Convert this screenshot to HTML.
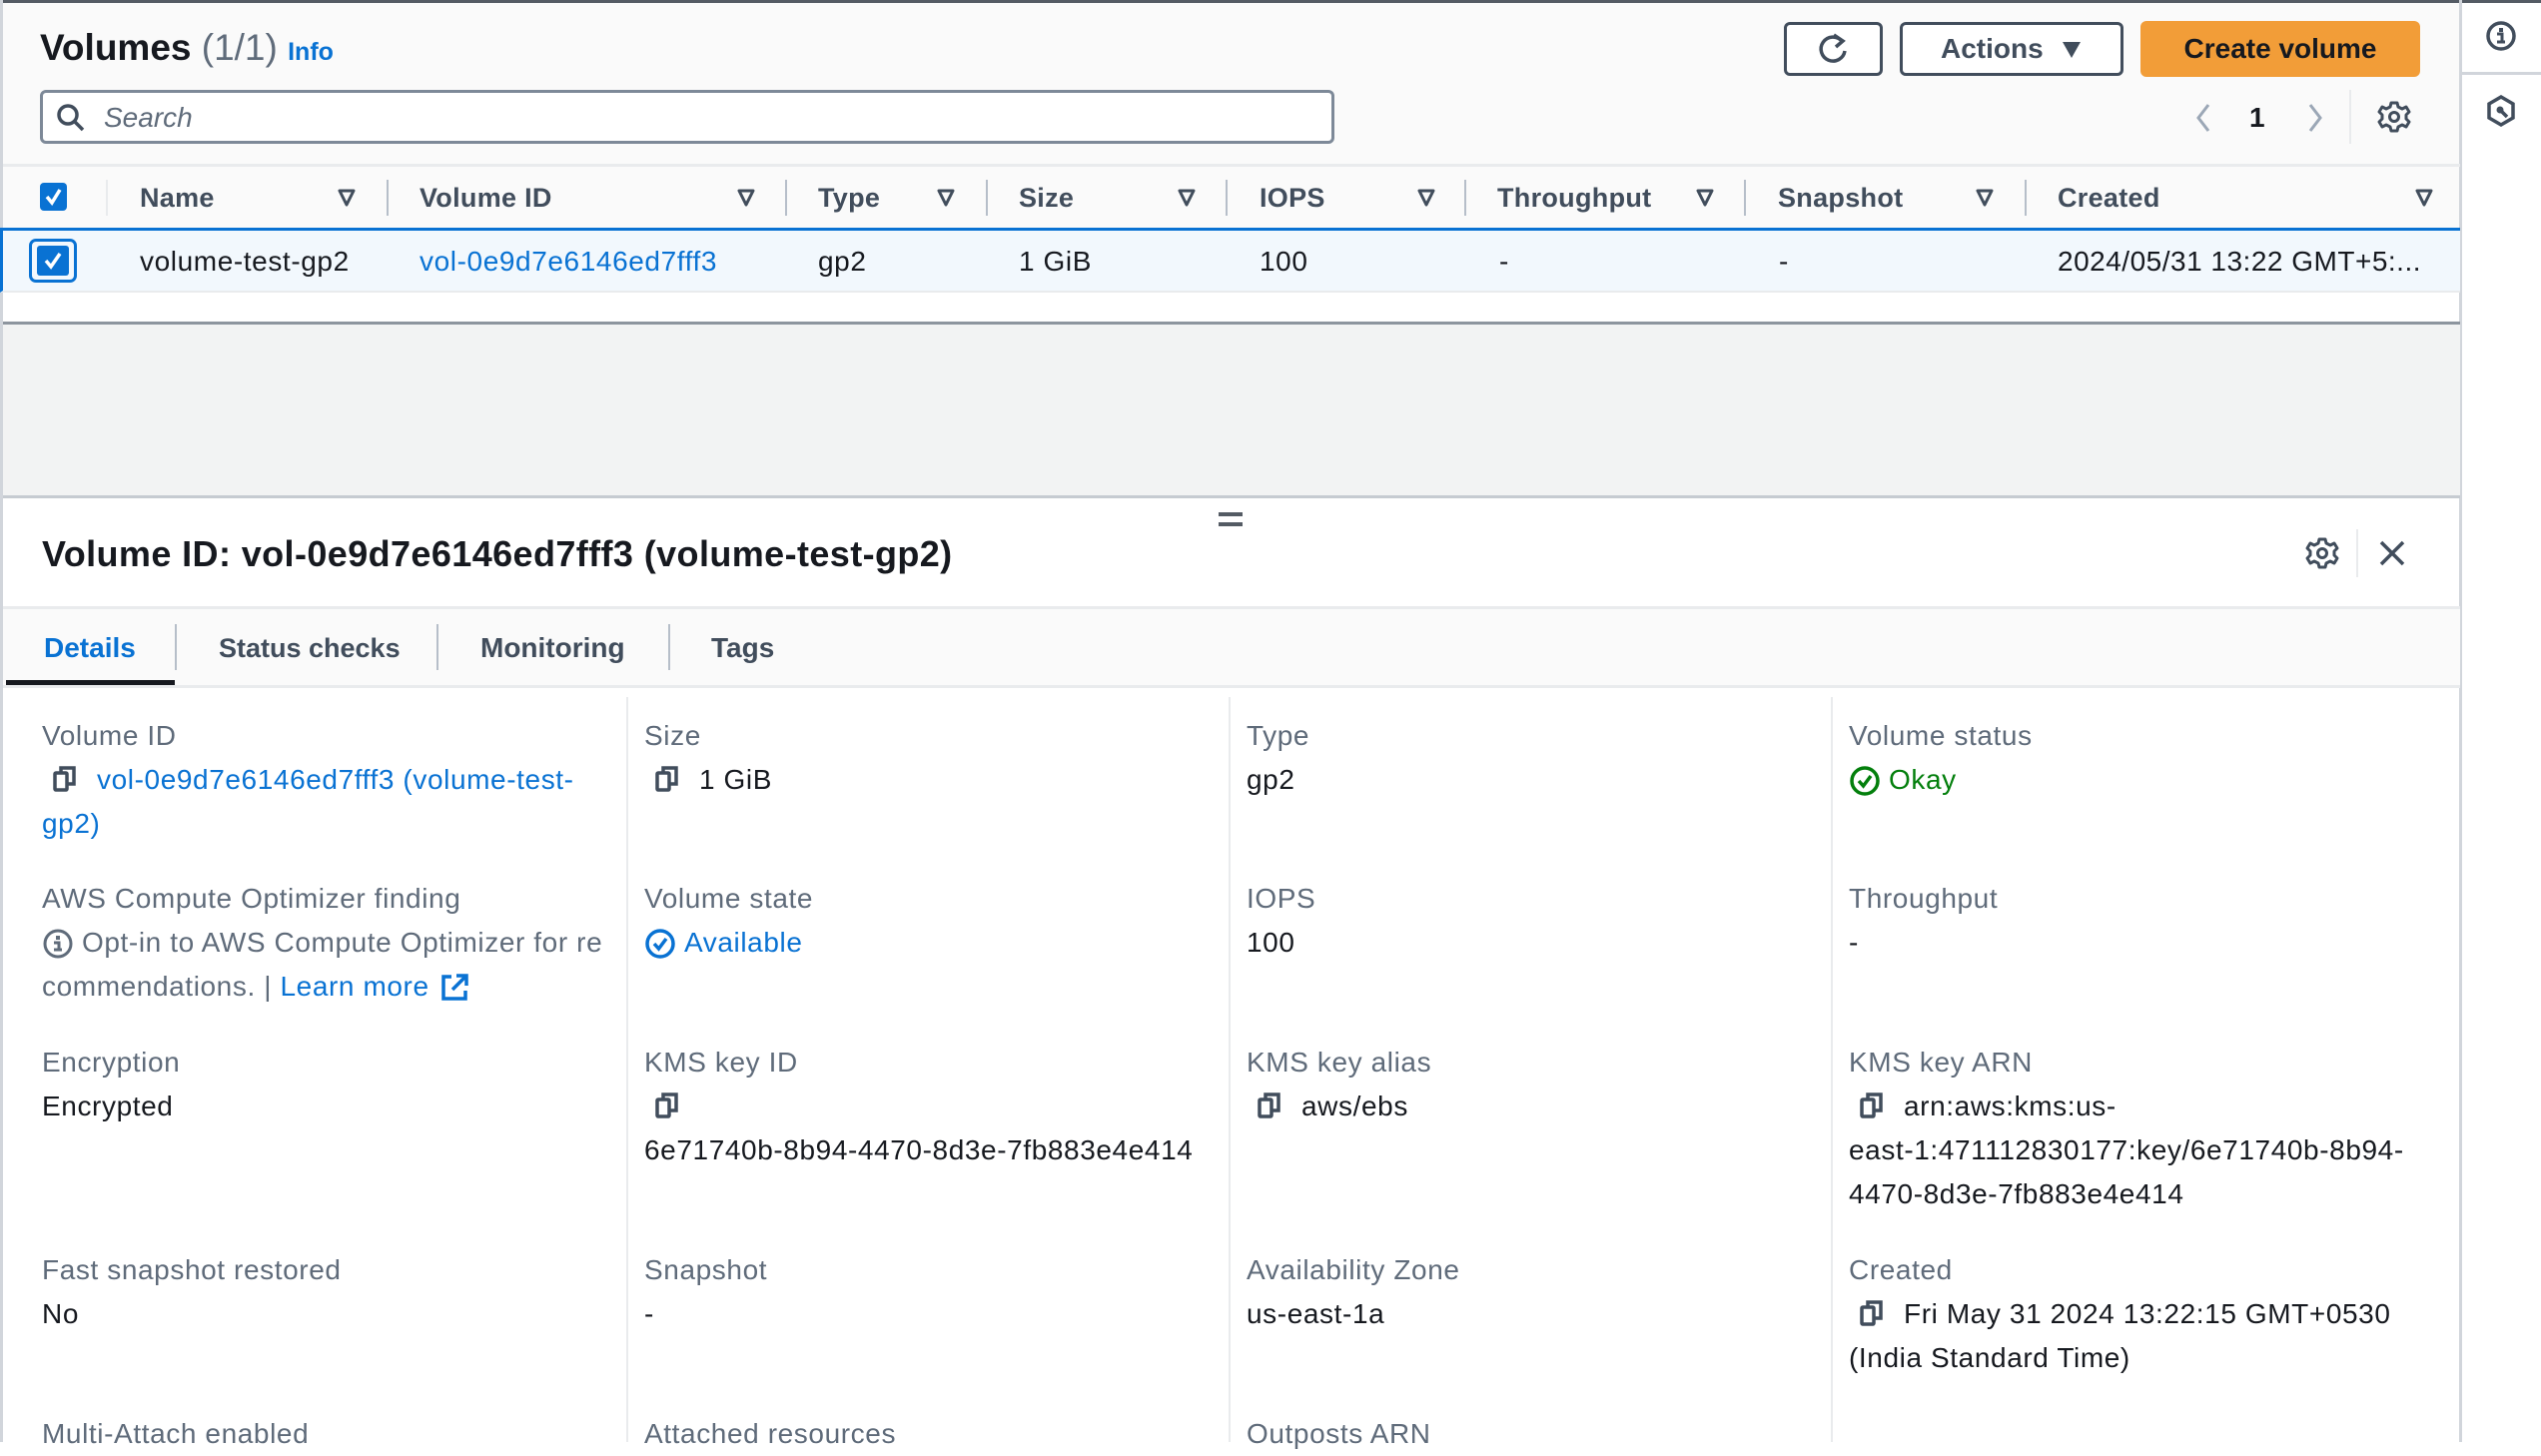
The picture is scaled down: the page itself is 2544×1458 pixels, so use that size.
<!DOCTYPE html>
<html><head><meta charset="utf-8"><style>
*{margin:0;padding:0;box-sizing:border-box}
html,body{width:2544px;height:1444px;overflow:hidden;background:#fff;font-family:"Liberation Sans",sans-serif;color:#16191f}
.a{position:absolute;white-space:nowrap}
.t{position:absolute;white-space:nowrap;height:44px;line-height:44px;font-size:28px;letter-spacing:0.6px}
.lb{color:#5f6b7a}
.lk{color:#0972d3}
.h{position:absolute;white-space:nowrap;height:44px;line-height:44px;font-size:27px;font-weight:bold;color:#414d5c;letter-spacing:0.3px}
.sep{position:absolute;width:2px;background:#b6bec9;top:180px;height:36px}
.fi{position:absolute;top:188px}
.csep{position:absolute;width:2px;background:#e9ebed;top:698px;height:746px}
</style></head><body>
<div class="a" style="left:0;top:0;width:2463px;height:230px;background:#fafafa"></div>
<div class="a" style="left:0;top:0;width:2544px;height:3px;background:#545b64"></div>
<div class="a" style="left:0;top:0;width:3px;height:1444px;background:#d1d5db"></div>
<div class="a" style="left:2462px;top:0;width:3px;height:1444px;background:#d1d5db"></div>
<div class="a" style="left:2465px;top:72px;width:79px;height:3px;background:#d1d5db"></div>
<svg class="a" style="left:2488px;top:20px" width="32" height="32" viewBox="0 0 32 32"><circle cx="16" cy="16" r="13" fill="none" stroke="#414d5c" stroke-width="3.5"/><rect x="14" y="8" width="4" height="4" fill="#414d5c"/><path d="M12 14h5v8h3M12 22h8" stroke="#414d5c" stroke-width="3" fill="none"/></svg>
<svg class="a" style="left:2488px;top:94px" width="32" height="34" viewBox="0 0 32 34"><path d="M16 3L28 10V24L16 31L4 24V10Z" fill="none" stroke="#414d5c" stroke-width="3.5"/><circle cx="15" cy="16" r="3.5" fill="#414d5c"/><path d="M15 16L22 23" stroke="#414d5c" stroke-width="3.5"/></svg>

<div class="a" style="left:40px;top:24px;font-size:37px;line-height:48px;font-weight:bold;color:#16191f">Volumes <span style="font-weight:normal;color:#5f6b7a">(1/1)</span> <span style="font-size:25px;color:#0972d3;font-weight:bold;vertical-align:0px">Info</span></div>
<div class="a" style="left:1786px;top:22px;width:99px;height:54px;border:3px solid #414d5c;border-radius:6px;background:#fff"></div>
<svg class="a" style="left:1818px;top:32px" width="34" height="34" viewBox="0 0 34 34"><path d="M26 9A12 12 0 1 0 29 19" fill="none" stroke="#414d5c" stroke-width="3.5"/><path d="M18 3L27 9L20 15" fill="none" stroke="#414d5c" stroke-width="3.5"/></svg>
<div class="a" style="left:1902px;top:22px;width:224px;height:54px;border:3px solid #414d5c;border-radius:6px;background:#fff"></div>
<div class="a" style="left:1943px;top:27px;font-size:28px;line-height:44px;font-weight:bold;color:#414d5c">Actions</div>
<svg class="a" style="left:2063px;top:40px" width="22" height="20" viewBox="0 0 22 20"><path d="M2 2H20L11 18Z" fill="#414d5c"/></svg>
<div class="a" style="left:2143px;top:21px;width:280px;height:56px;background:#f29d38;border-radius:6px;font-size:28px;font-weight:bold;line-height:56px;text-align:center;color:#16191f">Create volume</div>
<div class="a" style="left:40px;top:90px;width:1296px;height:54px;border:3px solid #7d8998;border-radius:6px;background:#fff"></div>
<svg class="a" style="left:56px;top:103px" width="30" height="30" viewBox="0 0 30 30"><circle cx="12" cy="12" r="9" fill="none" stroke="#414d5c" stroke-width="3.5"/><path d="M19 19L27 27" stroke="#414d5c" stroke-width="3.5"/></svg>
<div class="a" style="left:104px;top:96px;font-size:28px;line-height:44px;font-style:italic;color:#5f6b7a">Search</div>
<svg class="a" style="left:2196px;top:102px" width="20" height="32" viewBox="0 0 20 32"><path d="M15 3L5 16L15 29" fill="none" stroke="#9ba7b6" stroke-width="3"/></svg>
<div class="a" style="left:2252px;top:96px;font-size:28px;line-height:44px;font-weight:bold">1</div>
<svg class="a" style="left:2308px;top:102px" width="20" height="32" viewBox="0 0 20 32"><path d="M5 3L15 16L5 29" fill="none" stroke="#9ba7b6" stroke-width="3"/></svg>
<div class="a" style="left:2352px;top:90px;width:2px;height:54px;background:#e9ebed"></div>
<svg class="a" style="left:2380px;top:100px" width="34" height="34" viewBox="0 0 34 34"><path d="M14 3h6l1 4 4 2 4-2 3 5-3 3v4l3 3-3 5-4-2-4 2-1 4h-6l-1-4-4-2-4 2-3-5 3-3v-4l-3-3 3-5 4 2 4-2z" fill="none" stroke="#414d5c" stroke-width="3" stroke-linejoin="round"/><circle cx="17" cy="17" r="4.5" fill="none" stroke="#414d5c" stroke-width="3"/></svg>

<div class="a" style="left:3px;top:164px;width:2460px;height:3px;background:#e9ebed"></div>
<div class="a" style="left:40px;top:183px;width:27px;height:28px;background:#0972d3;border-radius:4px"></div>
<svg class="a" style="left:40px;top:183px" width="27" height="28" viewBox="0 0 27 28"><path d="M7 14L12 20L20 7" fill="none" stroke="#fff" stroke-width="3.5"/></svg>
<div class="a" style="left:106px;top:180px;width:2px;height:36px;background:#e9ebed"></div>
<div class="h" style="left:140px;top:176px">Name</div>
<div class="h" style="left:420px;top:176px">Volume ID</div>
<div class="h" style="left:819px;top:176px">Type</div>
<div class="h" style="left:1020px;top:176px">Size</div>
<div class="h" style="left:1261px;top:176px">IOPS</div>
<div class="h" style="left:1499px;top:176px">Throughput</div>
<div class="h" style="left:1780px;top:176px">Snapshot</div>
<div class="h" style="left:2060px;top:176px">Created</div>
<div class="sep" style="left:387px"></div><div class="sep" style="left:786px"></div><div class="sep" style="left:987px"></div><div class="sep" style="left:1227px"></div><div class="sep" style="left:1466px"></div><div class="sep" style="left:1746px"></div><div class="sep" style="left:2027px"></div>
<svg class="fi" style="left:337px" width="20" height="20" viewBox="0 0 20 20"><path d="M3 3H17L10 17Z" fill="none" stroke="#414d5c" stroke-width="3" stroke-linejoin="round"/></svg>
<svg class="fi" style="left:737px" width="20" height="20" viewBox="0 0 20 20"><path d="M3 3H17L10 17Z" fill="none" stroke="#414d5c" stroke-width="3" stroke-linejoin="round"/></svg>
<svg class="fi" style="left:937px" width="20" height="20" viewBox="0 0 20 20"><path d="M3 3H17L10 17Z" fill="none" stroke="#414d5c" stroke-width="3" stroke-linejoin="round"/></svg>
<svg class="fi" style="left:1178px" width="20" height="20" viewBox="0 0 20 20"><path d="M3 3H17L10 17Z" fill="none" stroke="#414d5c" stroke-width="3" stroke-linejoin="round"/></svg>
<svg class="fi" style="left:1418px" width="20" height="20" viewBox="0 0 20 20"><path d="M3 3H17L10 17Z" fill="none" stroke="#414d5c" stroke-width="3" stroke-linejoin="round"/></svg>
<svg class="fi" style="left:1697px" width="20" height="20" viewBox="0 0 20 20"><path d="M3 3H17L10 17Z" fill="none" stroke="#414d5c" stroke-width="3" stroke-linejoin="round"/></svg>
<svg class="fi" style="left:1977px" width="20" height="20" viewBox="0 0 20 20"><path d="M3 3H17L10 17Z" fill="none" stroke="#414d5c" stroke-width="3" stroke-linejoin="round"/></svg>
<svg class="fi" style="left:2417px" width="20" height="20" viewBox="0 0 20 20"><path d="M3 3H17L10 17Z" fill="none" stroke="#414d5c" stroke-width="3" stroke-linejoin="round"/></svg>
<div class="a" style="left:0;top:228px;width:2463px;height:65px;background:#f2f8fd;border-top:3px solid #0972d3;border-left:3px solid #0972d3;border-bottom:2px solid #e9ebed"></div>
<div class="a" style="left:29px;top:239px;width:48px;height:44px;border:3px solid #0972d3;border-radius:7px"></div>
<div class="a" style="left:37px;top:246px;width:32px;height:30px;background:#0972d3;border-radius:3px"></div>
<svg class="a" style="left:37px;top:246px" width="32" height="30" viewBox="0 0 32 30"><path d="M9 15L14 21L23 8" fill="none" stroke="#fff" stroke-width="3.5"/></svg>
<div class="t" style="left:140px;top:240px">volume-test-gp2</div>
<div class="t lk" style="left:420px;top:240px">vol-0e9d7e6146ed7fff3</div>
<div class="t" style="left:819px;top:240px">gp2</div>
<div class="t" style="left:1020px;top:240px">1 GiB</div>
<div class="t" style="left:1261px;top:240px">100</div>
<div class="t" style="left:1501px;top:240px">-</div>
<div class="t" style="left:1781px;top:240px">-</div>
<div class="t" style="left:2060px;top:240px;letter-spacing:0.5px">2024/05/31 13:22 GMT+5:...</div>
<div class="a" style="left:3px;top:322px;width:2460px;height:177px;background:#f2f3f3;border-top:3px solid #8d959e;border-bottom:3px solid #c6cbd1"></div>
<div class="a" style="left:1220px;top:513px;width:24px;height:4px;background:#545b64"></div>
<div class="a" style="left:1220px;top:523px;width:24px;height:4px;background:#545b64"></div>
<div class="a" style="left:42px;top:532px;font-size:36px;line-height:46px;font-weight:bold;letter-spacing:0.4px">Volume ID: vol-0e9d7e6146ed7fff3 (volume-test-gp2)</div>
<svg class="a" style="left:2308px;top:537px" width="34" height="34" viewBox="0 0 34 34"><path d="M14 3h6l1 4 4 2 4-2 3 5-3 3v4l3 3-3 5-4-2-4 2-1 4h-6l-1-4-4-2-4 2-3-5 3-3v-4l-3-3 3-5 4 2 4-2z" fill="none" stroke="#414d5c" stroke-width="3" stroke-linejoin="round"/><circle cx="17" cy="17" r="4.5" fill="none" stroke="#414d5c" stroke-width="3"/></svg>
<div class="a" style="left:2359px;top:530px;width:2px;height:48px;background:#e9ebed"></div>
<svg class="a" style="left:2381px;top:540px" width="28" height="28" viewBox="0 0 28 28"><path d="M3 3L25 25M25 3L3 25" stroke="#414d5c" stroke-width="3.5"/></svg>
<div class="a" style="left:3px;top:607px;width:2460px;height:82px;background:#fafafa;border-top:3px solid #e9ebed;border-bottom:3px solid #e9ebed"></div>
<div class="a" style="left:6px;top:681px;width:169px;height:5px;background:#16191f"></div>
<div class="a" style="left:44px;top:627px;font-size:28px;line-height:44px;font-weight:bold;color:#0972d3">Details</div>
<div class="a" style="left:175px;top:625px;width:2px;height:46px;background:#b6bec9"></div>
<div class="a" style="left:219px;top:627px;font-size:27px;line-height:44px;font-weight:bold;color:#414d5c">Status checks</div>
<div class="a" style="left:437px;top:625px;width:2px;height:46px;background:#b6bec9"></div>
<div class="a" style="left:481px;top:627px;font-size:28px;line-height:44px;font-weight:bold;color:#414d5c">Monitoring</div>
<div class="a" style="left:669px;top:625px;width:2px;height:46px;background:#b6bec9"></div>
<div class="a" style="left:712px;top:627px;font-size:28px;line-height:44px;font-weight:bold;color:#414d5c">Tags</div>
<div class="csep" style="left:627px"></div><div class="csep" style="left:1230px"></div><div class="csep" style="left:1833px"></div>

<div class="t lb" style="left:42px;top:715px">Volume ID</div>
<svg class="a" style="left:52px;top:766px" width="26" height="28" viewBox="0 0 26 28"><rect x="3" y="8" width="12" height="17" rx="1" fill="none" stroke="#414d5c" stroke-width="3.5"/><path d="M9 8V3H22V19H15" fill="none" stroke="#414d5c" stroke-width="3.5"/></svg>
<div class="t lk" style="left:97px;top:759px">vol-0e9d7e6146ed7fff3 (volume-test-</div>
<div class="t lk" style="left:42px;top:803px">gp2)</div>
<div class="t lb" style="left:645px;top:715px">Size</div>
<svg class="a" style="left:655px;top:766px" width="26" height="28" viewBox="0 0 26 28"><rect x="3" y="8" width="12" height="17" rx="1" fill="none" stroke="#414d5c" stroke-width="3.5"/><path d="M9 8V3H22V19H15" fill="none" stroke="#414d5c" stroke-width="3.5"/></svg>
<div class="t" style="left:700px;top:759px">1 GiB</div>
<div class="t lb" style="left:1248px;top:715px">Type</div>
<div class="t" style="left:1248px;top:759px">gp2</div>
<div class="t lb" style="left:1851px;top:715px">Volume status</div>
<svg class="a" style="left:1851px;top:766px" width="32" height="32" viewBox="0 0 32 32"><circle cx="16" cy="16" r="13" fill="none" stroke="#037f0c" stroke-width="3.5"/><path d="M10 16L14.5 21L22 11" fill="none" stroke="#037f0c" stroke-width="3.5"/></svg>
<div class="t" style="left:1891px;top:759px;color:#037f0c">Okay</div>
<div class="t lb" style="left:42px;top:878px">AWS Compute Optimizer finding</div>
<svg class="a" style="left:42px;top:929px" width="32" height="32" viewBox="0 0 32 32"><circle cx="16" cy="16" r="13" fill="none" stroke="#5f6b7a" stroke-width="3"/><rect x="14" y="8" width="4" height="4" fill="#5f6b7a"/><path d="M12 15h5v7M12 22h8" stroke="#5f6b7a" stroke-width="3" fill="none"/></svg>
<div class="t lb" style="left:82px;top:922px">Opt-in to AWS Compute Optimizer for re</div>
<div class="t lb" style="left:42px;top:966px">commendations. | <span class="lk">Learn more</span></div>
<svg class="a" style="left:440px;top:974px" width="30" height="30" viewBox="0 0 30 30"><path d="M12 4H4V26H26V18" fill="none" stroke="#0972d3" stroke-width="3.5"/><path d="M17 3H27V13M27 3L13 17" fill="none" stroke="#0972d3" stroke-width="3.5"/></svg>
<div class="t lb" style="left:645px;top:878px">Volume state</div>
<svg class="a" style="left:645px;top:929px" width="32" height="32" viewBox="0 0 32 32"><circle cx="16" cy="16" r="13" fill="none" stroke="#0972d3" stroke-width="3.5"/><path d="M10 16L14.5 21L22 11" fill="none" stroke="#0972d3" stroke-width="3.5"/></svg>
<div class="t lk" style="left:685px;top:922px">Available</div>
<div class="t lb" style="left:1248px;top:878px">IOPS</div>
<div class="t" style="left:1248px;top:922px">100</div>
<div class="t lb" style="left:1851px;top:878px">Throughput</div>
<div class="t" style="left:1851px;top:922px">-</div>
<div class="t lb" style="left:42px;top:1042px">Encryption</div>
<div class="t" style="left:42px;top:1086px">Encrypted</div>
<div class="t lb" style="left:645px;top:1042px">KMS key ID</div>
<svg class="a" style="left:655px;top:1093px" width="26" height="28" viewBox="0 0 26 28"><rect x="3" y="8" width="12" height="17" rx="1" fill="none" stroke="#414d5c" stroke-width="3.5"/><path d="M9 8V3H22V19H15" fill="none" stroke="#414d5c" stroke-width="3.5"/></svg>
<div class="t" style="left:645px;top:1130px">6e71740b-8b94-4470-8d3e-7fb883e4e414</div>
<div class="t lb" style="left:1248px;top:1042px">KMS key alias</div>
<svg class="a" style="left:1258px;top:1093px" width="26" height="28" viewBox="0 0 26 28"><rect x="3" y="8" width="12" height="17" rx="1" fill="none" stroke="#414d5c" stroke-width="3.5"/><path d="M9 8V3H22V19H15" fill="none" stroke="#414d5c" stroke-width="3.5"/></svg>
<div class="t" style="left:1303px;top:1086px">aws/ebs</div>
<div class="t lb" style="left:1851px;top:1042px">KMS key ARN</div>
<svg class="a" style="left:1861px;top:1093px" width="26" height="28" viewBox="0 0 26 28"><rect x="3" y="8" width="12" height="17" rx="1" fill="none" stroke="#414d5c" stroke-width="3.5"/><path d="M9 8V3H22V19H15" fill="none" stroke="#414d5c" stroke-width="3.5"/></svg>
<div class="t" style="left:1906px;top:1086px">arn:aws:kms:us-</div>
<div class="t" style="left:1851px;top:1130px">east-1:471112830177:key/6e71740b-8b94-</div>
<div class="t" style="left:1851px;top:1174px">4470-8d3e-7fb883e4e414</div>
<div class="t lb" style="left:42px;top:1250px">Fast snapshot restored</div>
<div class="t" style="left:42px;top:1294px">No</div>
<div class="t lb" style="left:645px;top:1250px">Snapshot</div>
<div class="t" style="left:645px;top:1294px">-</div>
<div class="t lb" style="left:1248px;top:1250px">Availability Zone</div>
<div class="t" style="left:1248px;top:1294px">us-east-1a</div>
<div class="t lb" style="left:1851px;top:1250px">Created</div>
<svg class="a" style="left:1861px;top:1301px" width="26" height="28" viewBox="0 0 26 28"><rect x="3" y="8" width="12" height="17" rx="1" fill="none" stroke="#414d5c" stroke-width="3.5"/><path d="M9 8V3H22V19H15" fill="none" stroke="#414d5c" stroke-width="3.5"/></svg>
<div class="t" style="left:1906px;top:1294px">Fri May 31 2024 13:22:15 GMT+0530</div>
<div class="t" style="left:1851px;top:1338px">(India Standard Time)</div>
<div class="t lb" style="left:42px;top:1414px">Multi-Attach enabled</div>
<div class="t lb" style="left:645px;top:1414px">Attached resources</div>
<div class="t lb" style="left:1248px;top:1414px">Outposts ARN</div>
</body></html>
